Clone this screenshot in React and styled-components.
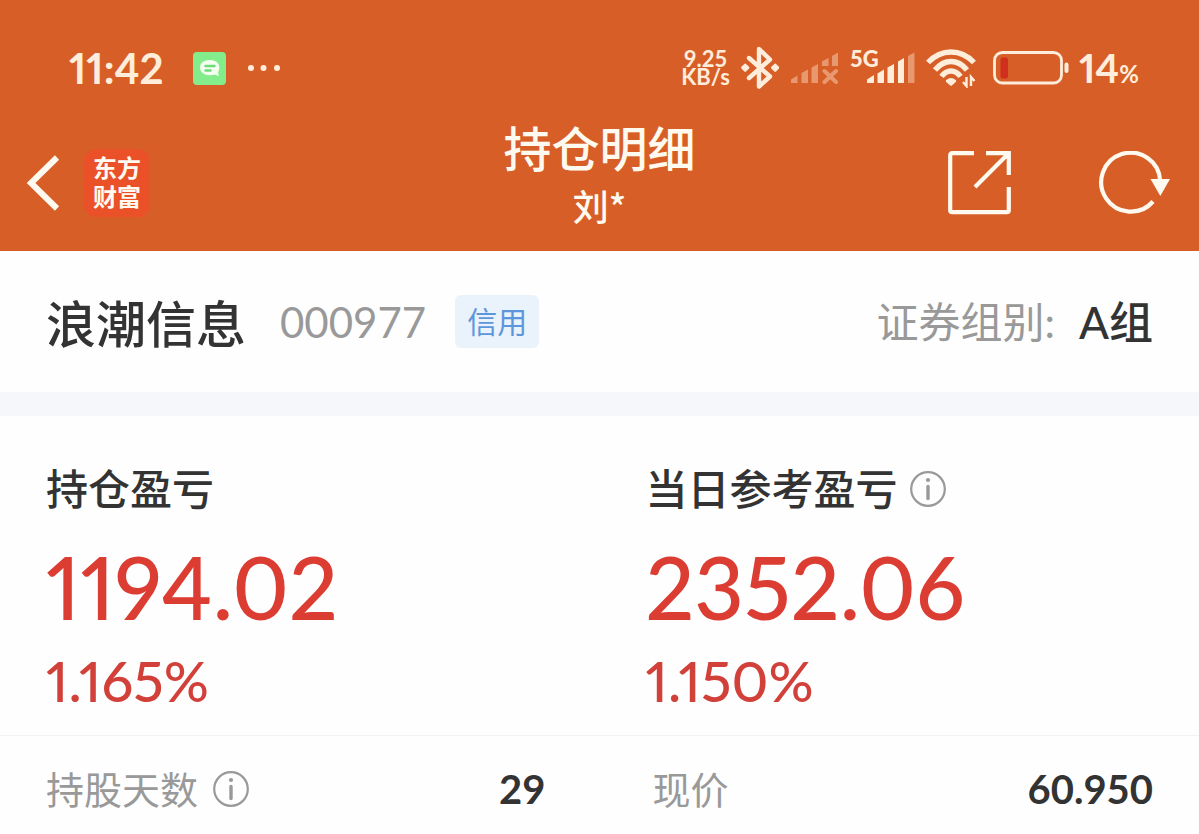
import React from "react";

import styled, { createGlobalStyle } from "styled-components";

const GlobalStyle = createGlobalStyle`
  * {
    box-sizing: border-box;
  }

  body {
    margin: 0;
    background: #fefefe;
    color: #333;
    font-family: Lato, "Noto Sans CJK SC", sans-serif;
  }

  h1, h2, p, dl, dt, dd {
    margin: 0;
    font-weight: 500;
  }

  svg {
    display: block;
    flex-shrink: 0;
  }
`;

const Header = styled.header`
  padding-bottom: 20px;
  background: #d75f27;
  color: #fffaf0;
`;

const StatusBar = styled.div`
  display: flex;
  justify-content: space-between;
  align-items: center;
  padding: 44px 60px 0 69px;
  color: #ffeddb;
`;

const StatusGroup = styled.div`
  display: flex;
  align-items: center;
  height: 48px;
  gap: ${(props) => props.$gap}px;
`;

const Clock = styled.time`
  margin-right: 8px;
  font-size: 42px;
  line-height: 48px;
  font-weight: 700;
  font-variant-numeric: proportional-nums;
`;

const Speed = styled.div`
  font-size: 22px;
  line-height: 18px;
  font-weight: 700;
  text-align: center;
`;

const Network = styled.div`
  position: relative;
  padding-left: 16px;
`;

const NetworkType = styled.span`
  position: absolute;
  left: 0;
  top: -4px;
  font-size: 22px;
  line-height: 22px;
  font-weight: 900;
`;

const Battery = styled.div`
  display: flex;
  align-items: center;
  gap: 10px;
  margin-left: 6px;
`;

const Charge = styled.span`
  font-size: 40px;
  line-height: 48px;
  font-weight: 700;
  font-variant-numeric: proportional-nums;

  small {
    font-size: 24px;
    line-height: 1;
  }
`;

const NavBar = styled.nav`
  display: grid;
  grid-template-columns: 1fr auto 1fr;
  align-items: center;
  margin-top: 27px;
  padding: 0 26px;
`;

const NavSide = styled.div`
  display: flex;
  align-items: center;
  justify-content: ${(props) => (props.$end ? "flex-end" : "flex-start")};
  gap: ${(props) => (props.$end ? 86 : 24)}px;
  padding-top: 16px;
`;

const IconButton = styled.button`
  padding: 0;
  border: 0;
  background: none;
  color: inherit;
  cursor: pointer;
`;

const Logo = styled.a`
  padding: 3px 0 7px;
  width: 66px;
  border-radius: 12px;
  background: #ea5129;
  color: #fffaf0;
  font-family: "Noto Sans CJK SC", sans-serif;
  font-size: 24px;
  line-height: 29px;
  font-weight: 700;
  text-align: center;
  text-decoration: none;
`;

const TitleBox = styled.div`
  text-align: center;
`;

const Title = styled.h1`
  font-size: 48px;
  line-height: 60px;
`;

const Owner = styled.p`
  font-family: "Noto Sans CJK SC", sans-serif;
  font-size: 36px;
  line-height: 52px;
`;

const Stock = styled.section`
  display: flex;
  justify-content: space-between;
  align-items: center;
  padding: 36px 46px;
  border-bottom: 24px solid #f6f7fa;
`;

const StockSide = styled.div`
  display: flex;
  align-items: center;
`;

const StockName = styled.h2`
  font-family: "Noto Sans CJK SC", sans-serif;
  font-size: 50px;
  line-height: 69px;
`;

const StockCode = styled.span`
  margin: 0 29px 0 34px;
  color: #999;
  font-size: 42px;
`;

const Tag = styled.span`
  padding: 0 12px;
  border-radius: 6px;
  background: #eaf2fb;
  color: #5c97de;
  font-size: 30px;
  line-height: 53px;
`;

const GroupLabel = styled.span`
  margin-right: 24px;
  color: #999;
  font-size: 42px;
  line-height: 60px;
`;

const GroupValue = styled.span`
  font-size: 44px;
  line-height: 60px;
  font-weight: 500;
`;

const Columns = styled.div`
  display: grid;
  grid-template-columns: 1fr 1fr;
`;

const Profit = styled.section`
  padding: 43px 0 20px 46px;
`;

const ProfitTitle = styled.h2`
  display: flex;
  align-items: center;
  gap: 12px;
  font-size: 42px;
  line-height: 60px;
`;

const Amount = styled.p`
  margin-top: 18px;
  color: #dc3d33;
  font-size: 86px;
  line-height: 100px;
  font-variant-numeric: proportional-nums;
`;

const Percent = styled.p`
  margin-top: 10px;
  color: #d2403a;
  font-size: 56px;
  line-height: 68px;
  font-variant-numeric: proportional-nums;
`;

const Details = styled.dl`
  display: grid;
  grid-template-columns: 1fr 1fr;
  border-top: 1px solid #f3f3f3;
`;

const Detail = styled.div`
  display: flex;
  justify-content: space-between;
  align-items: center;
  padding: 24px 46px 14px 53px;

  &:first-child {
    padding-left: 46px;
    padding-right: 54px;
  }

  dt {
    display: flex;
    align-items: center;
    gap: 15px;
    color: #999;
    font-size: 38px;
    line-height: 58px;
    font-weight: 400;
  }

  dd {
    font-size: 40px;
    line-height: 58px;
    font-weight: 700;
  }
`;

const InfoButton = styled(IconButton)`
  color: #999;
`;

function Info() {
  return (
    <InfoButton aria-label="说明">
      <svg width="36" height="36" viewBox="0 0 36 36" fill="none" stroke="currentColor">
        <circle cx="18" cy="18" r="16.8" strokeWidth="2.2" />
        <path d="M18 15.5v12" strokeWidth="3.4" strokeLinecap="round" />
        <circle cx="18" cy="9" r="2.1" fill="currentColor" stroke="none" />
      </svg>
    </InfoButton>
  );
}

function MessageIcon() {
  return (
    <svg width="33" height="33" viewBox="0 0 33 33">
      <rect width="33" height="33" rx="4" fill="#84ed8b" />
      <path d="M17 8c5.5 0 9.3 3 9.3 7.5c0 2-.7 3.5-1.3 4.5l.8 4.2-4-1.7c-1.5.5-3 .7-4.8.7C11 23.2 7 20 7 15.5S11 8 17 8z" fill="#f4fff0" />
      <path d="M12.5 14h9M12.5 18.5h5" stroke="#6cda78" strokeWidth="2.4" strokeLinecap="round" />
    </svg>
  );
}

function MoreIcon() {
  return (
    <svg width="34" height="8" viewBox="0 0 34 8" fill="currentColor">
      <circle cx="4" cy="4" r="3" />
      <circle cx="16.5" cy="4" r="3" />
      <circle cx="30" cy="4" r="3" />
    </svg>
  );
}

function BluetoothIcon() {
  return (
    <svg width="38" height="46" viewBox="0 0 38 46" fill="none" stroke="currentColor">
      <path d="M8 13l21 18.5-11 10V4l11 10.5L8 33" strokeWidth="4.4" strokeLinecap="round" strokeLinejoin="round" />
      <path d="M4.2 20.3l2.5 2.4-2.5 2.4-2.4-2.4zM34.2 20.3l2.4 2.4-2.4 2.4-2.5-2.4z" fill="currentColor" strokeWidth="3.2" strokeLinejoin="round" />
    </svg>
  );
}

function NoSignalIcon() {
  return (
    <svg width="49" height="32" viewBox="0 0 49 32" fill="currentColor" opacity="0.4">
      <path d="M1 27.5l6.5-4V31H1zM11.5 21l6.5-3.5V31h-6.5zM21.5 15.5L28 12v19h-6.5zM32 9.5L38.5 6v8H32zM42 4l6-3.5V14h-6z" />
      <path d="M34.5 19l11.5 11M46 19L34.5 30" stroke="currentColor" strokeWidth="4" strokeLinecap="round" />
    </svg>
  );
}

function SignalIcon() {
  return (
    <svg width="49" height="32" viewBox="0 0 49 32" fill="currentColor">
      <path d="M1 27.5l7-4.5v8H1zM11.5 21.5l6.5-4V31h-6.5zM21.5 15.5L28 12v19h-6.5zM32 9.5L38 6v25h-6z" />
      <path d="M42 4l6.5-3.5V31H42z" opacity="0.4" />
    </svg>
  );
}

function WifiIcon() {
  return (
    <svg width="50" height="40" viewBox="0 0 50 40" fill="none" stroke="currentColor" strokeWidth="5.4">
      <path d="M2 14.5Q12 4 25 4t23 10.5M9 22Q16 13.5 25 13.5T41 22M15.5 28.5Q19.5 23 25 23t9.5 5.5" />
      <path d="M21 33q4-3.5 8 0l-4 3.5z" fill="currentColor" strokeWidth="2.4" strokeLinejoin="round" />
      <path d="M40.5 29v9l-3.5-4M45 38v-9l3.5 4" strokeWidth="2.4" />
    </svg>
  );
}

function BatteryIcon() {
  return (
    <svg width="76" height="34" viewBox="0 0 76 34" fill="none">
      <rect x="1.5" y="1.5" width="67" height="30.5" rx="8" stroke="currentColor" strokeWidth="2.8" />
      <rect x="7.5" y="6.5" width="7.5" height="21" rx="2" fill="#d02e1f" />
      <rect x="71.5" y="11.5" width="4" height="10.5" rx="2" fill="currentColor" />
    </svg>
  );
}

function App() {
  return (
    <>
      <GlobalStyle />
      <Header>
        <StatusBar>
          <StatusGroup $gap={21}>
            <Clock>11:42</Clock>
            <MessageIcon />
            <MoreIcon />
          </StatusGroup>
          <StatusGroup $gap={11}>
            <Speed>
              <div>9.25</div>
              <div>KB/s</div>
            </Speed>
            <BluetoothIcon />
            <NoSignalIcon />
            <Network>
              <NetworkType>5G</NetworkType>
              <SignalIcon />
            </Network>
            <WifiIcon />
            <Battery>
              <BatteryIcon />
              <Charge>14<small>%</small></Charge>
            </Battery>
          </StatusGroup>
        </StatusBar>
        <NavBar>
          <NavSide>
            <IconButton aria-label="返回">
              <svg width="34" height="56" viewBox="0 0 34 56" fill="none" stroke="currentColor" strokeWidth="6">
                <path d="M31 2.5L5 28l26 25.5" />
              </svg>
            </IconButton>
            <Logo href="#">东方<br />财富</Logo>
          </NavSide>
          <TitleBox>
            <Title>持仓明细</Title>
            <Owner>刘*</Owner>
          </TitleBox>
          <NavSide $end>
            <IconButton aria-label="分享">
              <svg width="64" height="64" viewBox="0 0 64 64" fill="none" stroke="currentColor" strokeWidth="4.2">
                <path d="M26 2.2H4.2a2 2 0 0 0-2 2v55a2 2 0 0 0 2 2h54.6a2 2 0 0 0 2-2V36M38 2.2h22.8V24M27 36L60 3" />
              </svg>
            </IconButton>
            <IconButton aria-label="刷新">
              <svg width="75" height="64" viewBox="0 0 75 64" fill="none" stroke="currentColor" strokeWidth="4.2">
                <path d="M62.2 30A29.5 29.5 0 1 0 55 50.5" />
                <path d="M52.5 28H72L62.3 45z" fill="currentColor" stroke="none" />
              </svg>
            </IconButton>
          </NavSide>
        </NavBar>
      </Header>

      <main>
        <Stock>
          <StockSide>
            <StockName>浪潮信息</StockName>
            <StockCode>000977</StockCode>
            <Tag>信用</Tag>
          </StockSide>
          <StockSide>
            <GroupLabel>证券组别:</GroupLabel>
            <GroupValue>A组</GroupValue>
          </StockSide>
        </Stock>

        <Columns>
          <Profit>
            <ProfitTitle>持仓盈亏</ProfitTitle>
            <Amount>1194.02</Amount>
            <Percent>1.165%</Percent>
          </Profit>
          <Profit>
            <ProfitTitle>当日参考盈亏<Info /></ProfitTitle>
            <Amount>2352.06</Amount>
            <Percent>1.150%</Percent>
          </Profit>
        </Columns>

        <Details>
          <Detail>
            <dt>持股天数<Info /></dt>
            <dd>29</dd>
          </Detail>
          <Detail>
            <dt>现价</dt>
            <dd>60.950</dd>
          </Detail>
        </Details>
      </main>
    </>
  );
}

export default App;
